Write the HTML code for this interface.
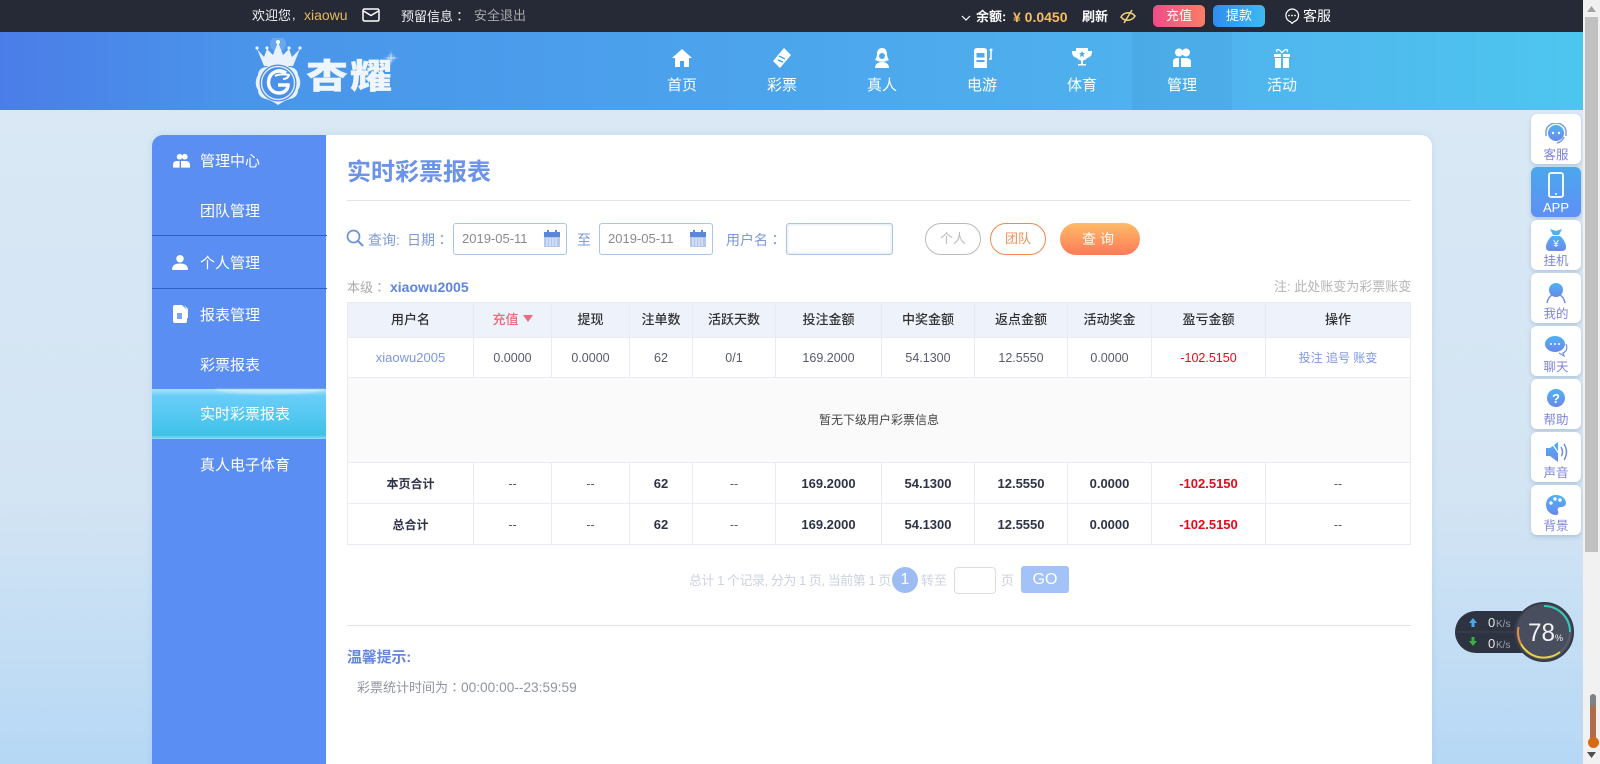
<!DOCTYPE html>
<html lang="zh-CN"><head><meta charset="utf-8"><title>实时彩票报表</title>
<style>
*{box-sizing:border-box;margin:0;padding:0}
html,body{width:1600px;height:764px;overflow:hidden}
body{position:relative;font-family:"Liberation Sans","Noto Sans CJK SC",sans-serif;font-size:13px;background:linear-gradient(180deg,#d9e8f4 110px,#d3e4f3 500px,#b6d8f5 764px)}
.a{position:absolute;white-space:nowrap;line-height:1}
.c{font-family:"Noto Sans CJK TC",sans-serif}
.top{position:absolute;left:0;top:0;width:1583px;height:32px;background:#252a36}
.hd{position:absolute;left:0;top:32px;width:1583px;height:78px;background:linear-gradient(90deg,#4b7de8 0,#4a94ea 15%,#4ba0ec 40%,#50b6ee 80%,#4dc6ef 100%)}
.nv{position:absolute;top:32px;width:100px;height:78px;color:#fff;text-align:center}
.nv svg{position:absolute;left:39px;top:16px;width:22px;height:20px}
.nv span{position:absolute;left:0;right:0;top:45px;font-size:15px;line-height:18px}
.card{position:absolute;left:152px;top:135px;width:1280px;height:660px;background:#fff;border-radius:11px;box-shadow:0 0 8px rgba(120,160,200,.2);overflow:hidden}
.sb{position:absolute;left:152px;top:135px;width:174px;height:660px;background:#5a8ef2;border-radius:11px 0 0 0}
.si{position:absolute;left:200px;color:#fff;font-size:15px;line-height:20px;white-space:nowrap}
.ln{position:absolute;left:152px;width:175px;height:1px;background:#2b62c9}
.act{position:absolute;left:152px;top:389px;width:174px;height:50px;background:linear-gradient(180deg,#a8e2fb 0,#69cdf8 14%,#54c8f2 55%,#3fc1e6 92%,#8fdcf3 100%)}
.inp{position:absolute;top:223px;height:32px;border:1px solid #a9c5ec;border-radius:3px;background:#fff;color:#8a8a8a;line-height:30px;padding-left:8px;font-size:13px}
.inp svg{position:absolute;right:6px;top:6px}
.bl{color:#7d99d8;font-size:14px}
.pb{position:absolute;top:223px;height:32px;border-radius:16px;text-align:center;line-height:30px;font-size:13px;background:#fff}
table{position:absolute;left:347px;top:302px;width:1063px;border-collapse:collapse;table-layout:fixed;font-size:12.5px;color:#555c6c}
td,th{border:1px solid #e8ebf1;text-align:center;padding:1px 0 0;font-weight:400;line-height:16px}
th{background:#eef2fb;color:#333;font-size:13px;height:35px;font-weight:500;padding:0 0 1px}
tr.b td{font-weight:700;color:#2d3448;height:41px;font-size:13px;padding:2px 0 0}
tr.b td.n{font-weight:400;color:#555c6c;font-size:12.5px}
tr.b td.l{font-size:12px}
.red{color:#e30b1c}
.lk{color:#7d96e6}
.sd{position:absolute;left:1531px;width:50px;height:50px;background:#fff;border-radius:6px;box-shadow:0 2px 4px rgba(100,130,170,.3);text-align:center;color:#7c84db;font-size:12.5px}
.sd span{position:absolute;left:0;right:0;top:34px;line-height:15px}
.sd svg{position:absolute;left:13px;top:9px;width:24px;height:22px}
</style></head><body>
<svg width="0" height="0" style="position:absolute"><defs><linearGradient id="g" x1="0" y1="0" x2="0" y2="1"><stop offset="0" stop-color="#4fb2f4"/><stop offset="1" stop-color="#6a88ea"/></linearGradient></defs></svg>
<div class="top"></div>
<span class="a" style="left:252px;top:9px;color:#f0f0f0">欢迎您</span>
<span class="a" style="left:292px;top:8px;color:#f0f0f0">,</span>
<span class="a" style="left:304px;top:8px;color:#e8b660;font-size:14px">xiaowu</span>
<svg class="a" style="left:362px;top:8px" width="18" height="14" viewBox="0 0 18 14"><rect x="1" y="1" width="16" height="12" rx="1.5" fill="none" stroke="#fff" stroke-width="1.5"/><path d="M1.5 3L9 7.500 16.500 3" fill="none" stroke="#fff" stroke-width="1.500"/></svg>
<span class="a" style="left:401px;top:9px;color:#f0f0f0">预留信息<span class="c" lang="zh-TW">：</span></span>
<span class="a" style="left:474px;top:9px;color:#a8a8a8">安全退出</span>
<svg class="a" style="left:961px;top:15px" width="10" height="7" viewBox="0 0 10 7"><path d="M1 1l4 4 4-4" fill="none" stroke="#fff" stroke-width="1.200"/></svg>
<b class="a" style="left:976px;top:10px;color:#fff">余额:</b>
<b class="a" style="left:1013px;top:10px;color:#f5bd5c;font-size:14px">¥ 0.0450</b>
<b class="a" style="left:1082px;top:10px;color:#fff">刷新</b>
<svg class="a" style="left:1120px;top:9px" width="16" height="15" viewBox="0 0 16 15"><path d="M1 8c3-5 10-6 14-1-3 5-10 6-14 1z" fill="none" stroke="#f3d27a" stroke-width="1.500"/><path d="M12 1L4 14" stroke="#f3d27a" stroke-width="1.500"/></svg>
<div class="a" style="left:1153px;top:5px;width:52px;height:22px;border-radius:5px;background:linear-gradient(90deg,#ee4d87,#fb7d68);color:#fff;text-align:center;line-height:22px">充值</div>
<div class="a" style="left:1213px;top:5px;width:52px;height:22px;border-radius:5px;background:linear-gradient(90deg,#2f8df2,#3dbaf2);color:#fff;text-align:center;line-height:22px">提款</div>
<svg class="a" style="left:1284px;top:8px" width="16" height="16" viewBox="0 0 16 16"><path d="M8 1a6.500 6.500 0 0 1 2 12.700L8 15.500l-1.500-1.800A6.500 6.500 0 0 1 8 1z" fill="none" stroke="#fff" stroke-width="1.200"/><circle cx="5" cy="7.500" r=".9" fill="#fff"/><circle cx="8" cy="7.500" r=".9" fill="#fff"/><circle cx="11" cy="7.500" r=".9" fill="#fff"/></svg>
<span class="a" style="left:1303px;top:9px;color:#fff;font-size:14px">客服</span>

<div class="hd"></div>
<div class="a" style="left:1132px;top:32px;width:100px;height:78px;background:rgba(40,90,150,.08)"></div>
<svg class="a" style="left:255px;top:38px" width="50" height="68" viewBox="0 0 50 68">
<circle cx="23" cy="6" r="8" fill="#fff" opacity=".18"/>
<path d="M2 11l7 8 3-8 6 6 5-13 5 13 6-6 3 8 8-8-7 17H9z" fill="#e9f2fc"/>
<circle cx="2" cy="10" r="1.600" fill="#e9f2fc"/><circle cx="45" cy="10" r="1.600" fill="#e9f2fc"/><circle cx="12" cy="10" r="1.600" fill="#e9f2fc"/><circle cx="34" cy="10" r="1.600" fill="#e9f2fc"/><circle cx="23" cy="4" r="2" fill="#fff"/>
<path d="M23 25c5 0 8 1 11 4 6 0 9 4 9 8 3 5 3 11 0 15 0 5-3 8-8 9-4 1-8 3-12 6-4-3-8-5-12-6-5-1-8-4-8-9-3-4-3-10 0-15 0-4 3-8 9-8 3-3 6-4 11-4z" fill="#e9f2fc"/>
<circle cx="23" cy="45" r="18.500" fill="#4a90e8"/>
<circle cx="23" cy="45" r="16.500" fill="none" stroke="#dfeafa" stroke-width="1.400"/>
<path d="M31 35c-6-4-15-2-17 6-2 8 3 14 10 14 5 0 9-3 9-8h-10" fill="none" stroke="#fff" stroke-width="3.500"/>
<path d="M20 38c4-2 10-2 14-1-1 3-3 4-6 4" fill="none" stroke="#fff" stroke-width="2"/>
</svg>
<b class="a" style="left:306px;top:56px;color:#eef5fd;font-size:42px;font-weight:900;letter-spacing:2px;-webkit-text-stroke:.3px #eef5fd;transform:scaleY(.82);transform-origin:0 50%">杏耀</b>
<svg class="a" style="left:383px;top:50px" width="16" height="16" viewBox="0 0 22 22"><circle cx="11" cy="11" r="6" fill="#fff" opacity=".2"/><path d="M11 0l1 10 10 1-10 1-1 10-1-10-10-1 10-1z" fill="#fff" opacity=".6"/></svg>

<div class="nv" style="left:632px"><svg viewBox="0 0 22 20"><path d="M11 1L1 10h3v9h5v-6h4v6h5v-9h3z" fill="#fff"/></svg><span>首页</span></div>
<div class="nv" style="left:732px"><svg viewBox="0 0 22 20"><path d="M13 0l7 7-11 13-7-7z" fill="#fff"/><path d="M8 8l6 3M7 12l5 2" stroke="#4ea6ec" stroke-width="1.500"/></svg><span>彩票</span></div>
<div class="nv" style="left:832px"><svg viewBox="0 0 22 20"><path d="M11 0c3.500 0 5 3 5 6 0 2 1 5 2 6l-3 1c-1 1-6 1-8 0l-3-1c1-1 2-4 2-6 0-3 1.500-6 5-6z" fill="#fff"/><circle cx="11" cy="8" r="3" fill="#4ea8ec"/><path d="M4 20c0-4 3-6 7-6s7 2 7 6z" fill="#fff"/></svg><span>真人</span></div>
<div class="nv" style="left:932px"><svg viewBox="0 0 22 20"><path d="M3 3q0-3 3-3h7q3 0 3 3v17H3z" fill="#fff"/><rect x="5.500" y="5" width="8" height="4.500" fill="#50a9ec"/><rect x="5.500" y="12" width="8" height="2" fill="#50a9ec"/><path d="M18 11h2V3" fill="none" stroke="#fff" stroke-width="1.500"/><circle cx="20" cy="2" r="1.500" fill="#fff"/></svg><span>电游</span></div>
<div class="nv" style="left:1032px"><svg viewBox="0 0 22 20"><path d="M5 0h12v3h4c0 4-1 6-5 7-1 1.500-2 2-4 2.500V16h3v1.500H7V16h3v-3.500c-2-.5-3-1-4-2.500-4-1-5-3-5-7h4z" fill="#fff"/><path d="M11 3l1 2h2l-1.500 1.500L13 9l-2-1-2 1 .5-2.500L8 5h2z" fill="#52abec"/></svg><span>体育</span></div>
<div class="nv" style="left:1132px"><svg viewBox="0 0 22 20"><circle cx="8" cy="4.500" r="4" fill="#fff"/><circle cx="15" cy="4.500" r="4" fill="#fff"/><path d="M2 19v-5q0-4 4-4h2v9zM10 19v-9h5q5 0 5 4v5z" fill="#fff"/></svg><span>管理</span></div>
<div class="nv" style="left:1232px"><svg viewBox="0 0 22 20"><path d="M3 6h7v3H3zM12 6h7v3h-7zM4 10h6v10H4zM12 10h6v10h-6z" fill="#fff"/><path d="M11 5C8 0 4 1 6 4M11 5c3-5 7-4 5-1" fill="none" stroke="#fff" stroke-width="1.300"/></svg><span>活动</span></div>

<div class="card"></div>
<div class="sb"></div>
<svg class="a" style="left:173px;top:153px" width="17" height="15" viewBox="0 0 18 15"><circle cx="7" cy="3.500" r="3" fill="#fff"/><circle cx="12.500" cy="3.500" r="3" fill="#fff"/><path d="M0 15v-3q0-4 4-4h3v7zM8.500 15V8h5q4.500 0 4.500 4v3z" fill="#fff"/></svg>
<span class="si" style="top:152px">管理中心</span>
<span class="si" style="top:202px">团队管理</span>
<div class="ln" style="top:235px"></div>
<svg class="a" style="left:172px;top:255px" width="16" height="15" viewBox="0 0 17 16"><circle cx="8.500" cy="4" r="4" fill="#fff"/><path d="M0 16c0-5 3-7 8.500-7S17 11 17 16z" fill="#fff"/></svg>
<span class="si" style="top:254px">个人管理</span>
<div class="ln" style="top:288px"></div>
<svg class="a" style="left:173px;top:305px" width="15" height="18" viewBox="0 0 15 18"><path d="M2 0h7l5 5v11q0 2-2 2H2q-2 0-2-2V2q0-2 2-2z" fill="#fff"/><path d="M11 0l4 4v9h-1V5z" fill="#fff"/><rect x="4" y="8" width="5" height="6" fill="#7ea6f5"/></svg>
<span class="si" style="top:306px">报表管理</span>
<span class="si" style="top:356px">彩票报表</span>
<div class="act"></div>
<div class="a" style="left:215px;top:389px;width:111px;height:5px;background:#fff;opacity:.4;border-radius:0 0 60px 60px/0 0 5px 5px;filter:blur(1px)"></div>
<span class="si" style="top:405px">实时彩票报表</span>
<span class="si" style="top:456px">真人电子体育</span>

<b class="a" style="left:347px;top:161px;color:#6b93ea;font-size:24px">实时彩票报表</b>
<div class="a" style="left:347px;top:200px;width:1064px;height:1px;background:#e4e4e4"></div>

<svg class="a" style="left:346px;top:229px" width="18" height="19" viewBox="0 0 18 19"><circle cx="7.500" cy="7.500" r="6" fill="none" stroke="#6e92d8" stroke-width="1.700"/><path d="M12 12l5 5" stroke="#6e92d8" stroke-width="2"/></svg>
<span class="a bl" style="left:368px;top:233px">查询:</span>
<span class="a bl" style="left:407px;top:233px">日期<span class="c" lang="zh-TW">：</span></span>
<div class="inp" style="left:453px;width:114px">2019-05-11<svg width="16" height="17" viewBox="0 0 16 17"><rect y="2" width="16" height="15" fill="#b5c8ec"/><rect y="2" width="16" height="5" fill="#5b87d8"/><rect x="3" width="2" height="4" fill="#5b87d8"/><rect x="11" width="2" height="4" fill="#5b87d8"/><path d="M3 8v8M6 8v8M9 8v8M12 8v8" stroke="#fff" stroke-width=".7"/></svg></div>
<span class="a bl" style="left:577px;top:233px">至</span>
<div class="inp" style="left:599px;width:114px">2019-05-11<svg width="16" height="17" viewBox="0 0 16 17"><rect y="2" width="16" height="15" fill="#b5c8ec"/><rect y="2" width="16" height="5" fill="#5b87d8"/><rect x="3" width="2" height="4" fill="#5b87d8"/><rect x="11" width="2" height="4" fill="#5b87d8"/><path d="M3 8v8M6 8v8M9 8v8M12 8v8" stroke="#fff" stroke-width=".7"/></svg></div>
<span class="a bl" style="left:726px;top:233px">用户名<span class="c" lang="zh-TW">：</span></span>
<div class="inp" style="left:786px;width:107px;box-shadow:inset 0 0 3px rgba(120,160,220,.35)"></div>
<div class="pb" style="left:925px;width:56px;border:1px solid #bbb;color:#bbb">个人</div>
<div class="pb" style="left:990px;width:56px;border:1px solid #ee8a4f;color:#f0905a">团队</div>
<div class="pb" style="left:1060px;width:80px;background:linear-gradient(180deg,#fdbb68,#ff7a58);color:#fff;letter-spacing:4px;line-height:32px;font-size:14px">查询</div>

<span class="a" style="left:347px;top:280px;color:#aaa">本级<span class="c" lang="zh-TW">：</span></span>
<b class="a" style="left:390px;top:280px;color:#5d86dd;font-size:14px">xiaowu2005</b>
<span class="a" style="left:1274px;top:280px;color:#b5b5b5">注: 此处账变为彩票账变</span>

<table>
<colgroup><col style="width:126px"><col style="width:78px"><col style="width:78px"><col style="width:63px"><col style="width:83px"><col style="width:106px"><col style="width:93px"><col style="width:93px"><col style="width:84px"><col style="width:114px"><col style="width:145px"></colgroup>
<tr><th>用户名</th><th style="color:#f0667a">充值<svg width="10" height="7" viewBox="0 0 10 7" style="margin-left:4px;vertical-align:2px"><path d="M0 0h10L5 7z" fill="#ef6a7c"/></svg></th><th>提现</th><th>注单数</th><th>活跃天数</th><th>投注金额</th><th>中奖金额</th><th>返点金额</th><th>活动奖金</th><th>盈亏金额</th><th>操作</th></tr>
<tr style="height:40px"><td class="lk" style="font-size:13px">xiaowu2005</td><td>0.0000</td><td>0.0000</td><td>62</td><td>0/1</td><td>169.2000</td><td>54.1300</td><td>12.5550</td><td>0.0000</td><td class="red">-102.5150</td><td class="lk" style="font-size:12px">投注 追号 账变</td></tr>
<tr style="height:85px"><td colspan="11" style="background:#fafafa;color:#444;font-size:12px;padding:0">暂无下级用户彩票信息</td></tr>
<tr class="b"><td class="l">本页合计</td><td class="n">--</td><td class="n">--</td><td>62</td><td class="n">--</td><td>169.2000</td><td>54.1300</td><td>12.5550</td><td>0.0000</td><td style="color:#e30b1c">-102.5150</td><td class="n">--</td></tr>
<tr class="b"><td class="l">总合计</td><td class="n">--</td><td class="n">--</td><td>62</td><td class="n">--</td><td>169.2000</td><td>54.1300</td><td>12.5550</td><td>0.0000</td><td style="color:#e30b1c">-102.5150</td><td class="n">--</td></tr>
</table>

<span class="a" style="left:689px;top:574px;color:#ccd2e0;font-size:13px;letter-spacing:-.48px">总计 1 个记录, 分为 1 页, 当前第 1 页</span>
<div class="a" style="left:892px;top:567px;width:26px;height:26px;border-radius:50%;background:#9dbcf3;color:#fff;text-align:center;line-height:26px;font-size:16px">1</div>
<span class="a" style="left:921px;top:574px;color:#ccd2e0">转至</span>
<div class="a" style="left:954px;top:567px;width:42px;height:27px;border:1px solid #ddd;border-radius:4px"></div>
<span class="a" style="left:1001px;top:574px;color:#ccd2e0">页</span>
<div class="a" style="left:1021px;top:566px;width:48px;height:27px;background:#a3c2f8;border-radius:3px;color:#fff;text-align:center;line-height:28px;font-size:16px">GO</div>
<div class="a" style="left:347px;top:625px;width:1064px;height:1px;background:#e4e4e4"></div>
<b class="a" style="left:347px;top:650px;color:#6489dc;font-size:15px;letter-spacing:-.2px">温馨提示:</b>
<span class="a" style="left:357px;top:680px;color:#8f94a1;font-size:13px">彩票统计时间为<span class="c" lang="zh-TW">：</span><span style="font-size:13.700px">00:00:00--23:59:59</span></span>

<div class="sd" style="top:114px"><svg viewBox="0 0 24 22"><circle cx="12" cy="10" r="8" fill="url(#g)"/><circle cx="9" cy="10" r="1.200" fill="#fff"/><circle cx="15" cy="10" r="1.200" fill="#fff"/><path d="M2 13V9a10 9 0 0 1 20 0v4M20 14q-2 5-7 6" fill="none" stroke="#7a9de0" stroke-width="1.500"/></svg><span>客服</span></div>
<div class="sd" style="top:167px;background:linear-gradient(180deg,#4ba8ec,#5f90f6);color:#fff"><svg viewBox="0 0 24 26" style="left:13px;top:5px;width:24px;height:26px"><rect x="5" y="1" width="14" height="24" rx="2" fill="none" stroke="#fff" stroke-width="1.800"/><circle cx="12" cy="22" r="1" fill="#fff"/></svg><span style="font-size:13px;top:33px">APP</span></div>
<div class="sd" style="top:220px"><svg viewBox="0 0 24 22"><path d="M6 0l6 2 6-2-3 6H9z" fill="#53b0ec"/><path d="M8 7h8c4 3 6 8 6 11q0 4-4 4H6q-4 0-4-4c0-3 2-8 6-11z" fill="url(#g)"/><text x="12" y="18" font-size="10" fill="#fff" text-anchor="middle" font-family="Liberation Sans">¥</text></svg><span>挂机</span></div>
<div class="sd" style="top:273px"><svg viewBox="0 0 24 22"><circle cx="12" cy="8" r="7" fill="url(#g)"/><path d="M3 21c1-5 3-7 5-8M21 21c-1-5-3-7-5-8" fill="none" stroke="#6e8fe0" stroke-width="1.500"/></svg><span>我的</span></div>
<div class="sd" style="top:326px"><svg viewBox="0 0 24 22"><ellipse cx="11" cy="9" rx="10" ry="8" fill="url(#g)"/><circle cx="7" cy="9" r="1" fill="#fff"/><circle cx="11" cy="9" r="1" fill="#fff"/><circle cx="15" cy="9" r="1" fill="#fff"/><path d="M22 9c2 4 0 8-3 9l1 3-5-3" fill="none" stroke="#6e8fe0" stroke-width="1.200"/></svg><span>聊天</span></div>
<div class="sd" style="top:379px"><svg viewBox="0 0 24 22"><circle cx="12" cy="10" r="9" fill="url(#g)"/><text x="12" y="15" font-size="13" font-weight="700" fill="#fff" text-anchor="middle" font-family="Liberation Sans">?</text></svg><span>帮助</span></div>
<div class="sd" style="top:432px"><svg viewBox="0 0 24 22"><path d="M2 7h4l8-6v20l-8-6H2z" fill="url(#g)"/><path d="M17 6q3 5 0 10M20 3q5 8 0 16" fill="none" stroke="#6e8fe0" stroke-width="1.500"/><path d="M7 1l13 19" stroke="#fff" stroke-width="1.200"/></svg><span>声音</span></div>
<div class="sd" style="top:485px"><svg viewBox="0 0 24 22"><path d="M12 1c6 0 10 4 10 8 0 3-3 4-5 4-3 0-4 2-3 4s0 4-2 4C6 21 2 16 2 11 2 5 6 1 12 1z" fill="url(#g)"/><circle cx="7" cy="9" r="1.700" fill="#fff"/><circle cx="11" cy="5" r="1.700" fill="#fff"/><circle cx="16" cy="6" r="1.700" fill="#fff"/></svg><span>背景</span></div>

<div class="a" style="left:1583px;top:0;width:17px;height:764px;background:#f1f1f1"></div>
<div class="a" style="left:1585px;top:17px;width:13px;height:535px;background:#c1c1c1"></div>
<svg class="a" style="left:1587px;top:6px" width="9" height="6"><path d="M0 6L4.500 0 9 6z" fill="#a3a3a3"/></svg>
<svg class="a" style="left:1587px;top:752px" width="9" height="6"><path d="M0 0L4.500 6 9 0z" fill="#505050"/></svg>
<div class="a" style="left:1590px;top:694px;width:6px;height:50px;border-radius:3px;background:linear-gradient(180deg,#7b8388 0,#7b8388 18%,#b26b48 30%,#b26b48 100%)"></div>
<div class="a" style="left:1588px;top:737px;width:11px;height:11px;border-radius:50%;background:#d96a14"></div>

<svg class="a" style="left:1455px;top:600px" width="125" height="66" viewBox="0 0 125 66">
<path d="M21 11h70v42H21a21 21 0 0 1 0-42z" fill="#2d3340"/>
<path d="M0 32h70" stroke="#3c4250" stroke-width="1"/>
<path d="M14 23l4-5 4 5h-2.500v4h-3v-4z" fill="#4aa8e6"/>
<path d="M14 41l4 5 4-5h-2.500v-4h-3v4z" fill="#3cae44"/>
<text x="33" y="27" font-size="13" fill="#e8e8e8" font-family="Liberation Sans">0</text><text x="41" y="27" font-size="10" fill="#9aa0ac" font-family="Liberation Sans">K/s</text>
<text x="33" y="48" font-size="13" fill="#e8e8e8" font-family="Liberation Sans">0</text><text x="41" y="48" font-size="10" fill="#9aa0ac" font-family="Liberation Sans">K/s</text>
<circle cx="89" cy="32" r="29" fill="#484e5d" stroke="#363b47" stroke-width="2"/>
<path d="M89 6A26 26 0 0 1 115 32" fill="none" stroke="#36c8b8" stroke-width="2"/>
<path d="M115 32A26 26 0 0 1 105 52" fill="none" stroke="#555b6a" stroke-width="2"/>
<path d="M105 52A26 26 0 0 1 66 44" fill="none" stroke="#e8d24a" stroke-width="2"/>
<path d="M66 44A26 26 0 0 1 63.500 27" fill="none" stroke="#ec8a3c" stroke-width="2"/>
<text x="73" y="41" font-size="25" fill="#f2f2f2" font-family="Liberation Sans" textLength="27" lengthAdjust="spacingAndGlyphs">78</text><text x="100" y="41" font-size="9" fill="#f2f2f2" font-family="Liberation Sans">%</text>
</svg>
</body></html>
